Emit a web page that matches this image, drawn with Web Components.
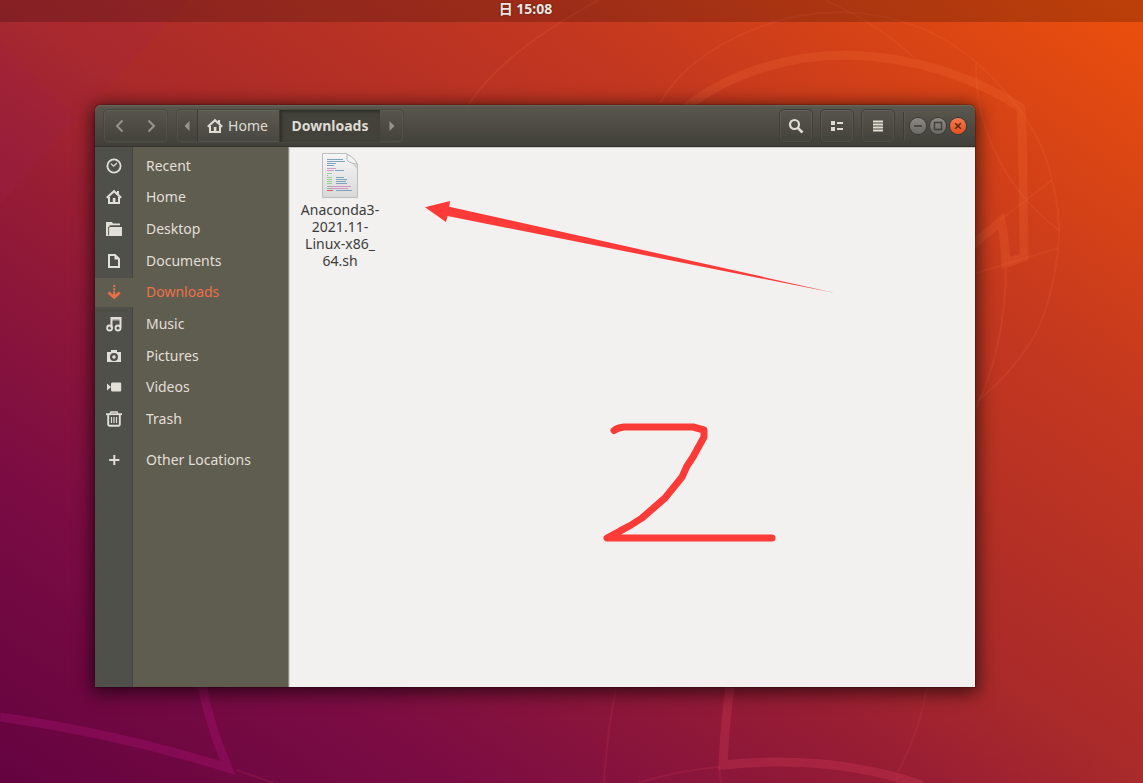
<!DOCTYPE html>
<html lang="en">
<head>
<meta charset="utf-8">
<title>Downloads</title>
<style>
  html, body { margin: 0; height: 100%; }
  body { font-family: "Noto Sans", "Noto Sans CJK SC", sans-serif; font-size: 14px; background: #a2242e; }
</style>
</head>
<body>
<desk-top>
  <top-bar slot="bar">日 15:08</top-bar>
  <file-window>
    <window-header slot="header"></window-header>
    <side-bar slot="side">
      <place-item icon="recent">Recent</place-item>
      <place-item icon="home">Home</place-item>
      <place-item icon="desktop">Desktop</place-item>
      <place-item icon="documents">Documents</place-item>
      <place-item icon="downloads" active>Downloads</place-item>
      <place-item icon="music">Music</place-item>
      <place-item icon="pictures">Pictures</place-item>
      <place-item icon="videos">Videos</place-item>
      <place-item icon="trash">Trash</place-item>
      <place-item icon="plus" slot="other">Other Locations</place-item>
    </side-bar>
    <file-item>Anaconda3-<br>2021.11-<br>Linux-x86_<br>64.sh</file-item>
    <pen-marks slot="marks"></pen-marks>
  </file-window>
</desk-top>

<script>
const define = (name, html) => customElements.define(name, class extends HTMLElement {
  constructor() {
    super();
    this.attachShadow({ mode: 'open' }).innerHTML = html;
  }
});

const ICONS = {
  recent: '<circle cx="8" cy="8" r="6.6" fill="none" stroke="currentColor" stroke-width="1.8"/><path d="M5 5.6 7.6 8.2 11 5" fill="none" stroke="currentColor" stroke-width="1.2"/>',
  home: '<path d="M.8 8.8 8 2.2l7.2 6.6" fill="none" stroke="currentColor" stroke-width="2"/><path d="M3 8v6h10V8" fill="none" stroke="currentColor" stroke-width="2"/><path d="M6.8 9h2.6v5H6.8zM11 2h2v4h-2z" fill="currentColor" stroke="none"/>',
  desktop: '<path d="M0 1h6l1 1.5h7V5H4.500L3 6.500V15H0z" fill="currentColor"/><path d="M4 6h12v9H3V7z" fill="currentColor"/><path d="M2.600 14.500V6L4 4.700h12" fill="none" stroke="#50504a" stroke-width=".9"/>',
  documents: '<path d="M3 2h6l4 4v8H3z" fill="none" stroke="currentColor" stroke-width="2"/><path d="M8.500 1.500v5h5z" fill="currentColor"/>',
  downloads: '<path d="M2.500 8.500 8.200 13.500 13.700 8.500" fill="none" stroke="currentColor" stroke-width="2.600"/><path d="M7.200 1h2v2h-2zM7.200 4.200h2v2h-2zM7.200 7.300h2v5h-2z" fill="currentColor"/>',
  music: '<path d="M5.500 12V2h9v9.500" fill="none" stroke="currentColor" stroke-width="2"/><path d="M5 2h10v2.500H5z" fill="currentColor" opacity=".7"/><circle cx="3.600" cy="12" r="2.500" fill="none" stroke="currentColor" stroke-width="1.800"/><circle cx="12" cy="12" r="2.500" fill="none" stroke="currentColor" stroke-width="1.800"/>',
  pictures: '<path fill-rule="evenodd" d="M5 2h6v2h4v10H1V4h4zM8 5a4 4 0 1 0 0 8 4 4 0 0 0 0-8zm0 2.200a1.800 1.800 0 1 1 0 3.600 1.800 1.800 0 0 1 0-3.600z" fill="currentColor"/>',
  videos: '<path d="M6 3.500h8.500l.7.700v7.600l-.7.700H6l-1-1V4.500zM1 4.500 5 8l-4 3.500z" fill="currentColor"/>',
  trash: '<path d="M0 3.200h16" stroke="currentColor" stroke-width="1.800"/><path d="M4 2.800 5 1h6l1 1.800" fill="none" stroke="currentColor" stroke-width="1.500"/><path d="M2.200 4v9.500q0 1.200 1.200 1.200h9.200q1.200 0 1.200-1.200V4" fill="none" stroke="currentColor" stroke-width="1.900"/><path d="M5.500 6v6M8 6v6M10.500 6v6" stroke="currentColor" stroke-width="1.200"/>',
  plus: '<path d="M8.300 3v10M3.200 8h10.200" stroke="currentColor" stroke-width="2"/>',
  back: '<path d="M10.500 2.500 5 8l5.500 5.500" fill="none" stroke="currentColor" stroke-width="2"/>',
  forward: '<path d="M5.500 2.500 11 8l-5.500 5.500" fill="none" stroke="currentColor" stroke-width="2"/>',
  left: '<path d="M10.500 3v10L5.500 8z" fill="currentColor"/>',
  right: '<path d="M5.500 3v10l5-5z" fill="currentColor"/>',
  search: '<circle cx="6.500" cy="6.500" r="4.500" fill="none" stroke="currentColor" stroke-width="2.200"/><path d="m9.800 9.800 4.700 4.700" stroke="currentColor" stroke-width="2.600"/>',
  view: '<path d="M2 3h4v4H2zM2 9h4v4H2zM8 4h6v2H8zM8 10h6v2H8z" fill="currentColor"/>',
  menu: '<path d="M3 2.500h10v2H3zM3 5.500h10v2H3zM3 8.500h10v2H3zM3 11.500h10v2H3z" fill="currentColor"/>',
  minimize: '<path d="M4 8h8" stroke="currentColor" stroke-width="1.600"/>',
  maximize: '<path d="M4.500 4.500h7v7h-7z" fill="none" stroke="currentColor" stroke-width="1.400"/>',
  close: '<path d="m5.200 5.200 5.600 5.600M10.800 5.200l-5.600 5.600" stroke="currentColor" stroke-width="1.500"/>'
};

customElements.define('sym-icon', class extends HTMLElement {
  connectedCallback() {
    if (this.shadowRoot) return;
    this.attachShadow({ mode: 'open' }).innerHTML =
      `<style>:host{display:block;width:16px;height:16px;flex:none}svg{display:block}</style>
       <svg width="16" height="16" viewBox="0 0 16 16" aria-hidden="true">${ICONS[this.getAttribute('name')]}</svg>`;
  }
});

define('wall-paper', `
  <style>
    :host { display: block; background: linear-gradient(to top right, #640340 0%, #7b0c43 20%, #991e33 41%, #a92a2a 50%, #c4381f 74%, #ec500b 100%); }
    svg { display: block; width: 100%; height: 100%; }
  </style>
  <svg viewBox="0 0 1143 783" preserveAspectRatio="xMidYMid slice" fill="none" aria-hidden="true">
    <path d="M0 0H189L0 205z" fill="#a02050" fill-opacity=".14"/>
    <path d="M0 43 75 118 0 198z" fill="#a02050" fill-opacity=".12"/>
    <g stroke="#ff7a40" stroke-opacity=".17" stroke-width="9">
      <path d="M684 109C730 72 790 55 848 55C915 57 975 77 1021 108Q1023 150 1023 183L1024 257L1006 263Q1005 240 1001 221L970 247"/>
    </g>
    <g stroke="#ff7a50" stroke-opacity=".12" stroke-width="2">
      <path d="M468 105Q505 50 599 0M660 103C690 50 770 12 841 12Q920 14 976 62Q1040 120 1052 180Q1062 220 1058 250Q1050 320 1023 353Q1000 385 975 402"/>
      <path d="M825 0Q880 25 913 57M976 62Q974 130 1018 190Q1038 215 1059 230M1052 180 1000 220M970 275 1058 248M1006 267Q1005 350 975 410"/>
    </g>
    <path d="M0 717Q115 733 228 768Q210 728 201 680" stroke="#b01478" stroke-opacity=".32" stroke-width="9"/>
    <path d="M731 680Q725 720 723 765Q830 754 922 785" stroke="#d83c58" stroke-opacity=".3" stroke-width="9"/>
    <path d="M236 770 274 783M616 688Q606 740 604 783M927 688Q920 730 898 772M638 783Q680 770 719 767L721 783" stroke="#e04060" stroke-opacity=".15" stroke-width="2"/>
  </svg>`);

define('desk-top', `
  <style>
    :host { display: flex; flex-direction: column; min-height: 100vh; position: relative; overflow: hidden; }
    wall-paper { position: absolute; inset: 0; }
    main { position: relative; flex: 1; display: flex; padding: 83px 168px 96px 95px; }
    ::slotted(file-window) { flex: 1; min-width: 0; }
  </style>
  <wall-paper></wall-paper>
  <slot name="bar"></slot>
  <main><slot></slot></main>`);

define('top-bar', `
  <style>
    :host { display: flex; justify-content: center; align-items: flex-start; position: relative; height: 22px; box-sizing: border-box; padding-right: 92px; background: rgba(0,0,0,.2); }
    button { all: unset; font-weight: 700; font-size: 14px; line-height: 18px; color: #ece6e0; text-shadow: 0 0 2px rgba(0,0,0,.5); }
  </style>
  <button type="button"><slot></slot></button>`);

define('file-window', `
  <style>
    :host { display: flex; flex-direction: column; border-radius: 6px 6px 0 0; box-shadow: 0 3px 18px 3px rgba(0,0,0,.62), 0 0 1px 1px rgba(30,10,10,.25); }
    .body { flex: 1; display: flex; min-height: 0; }
    .files { flex: 1; min-width: 0; position: relative; background: #f2f1ef; padding: 4px 9px; overflow: hidden; box-shadow: inset 1px 0 #d4d2ce, inset 0 1px #c9c8c5; }
  </style>
  <slot name="header"></slot>
  <div class="body">
    <slot name="side"></slot>
    <div class="files"><slot></slot><slot name="marks"></slot></div>
  </div>`);

define('window-header', `
  <style>
    :host { display: flex; align-items: center; height: 42px; box-sizing: border-box; padding: 0 9px 0 8px; border-radius: 6px 6px 0 0; border-bottom: 1px solid #34332e; background: linear-gradient(#5b584f, #403f39); box-shadow: inset 0 1px #69665c; color: #dfdbd2; }
    button { font: inherit; color: inherit; background: none; border: 0; padding: 0; margin: 0; display: flex; align-items: center; justify-content: center; }
    .group, .tool { box-sizing: border-box; display: flex; height: 34px; border: 1px solid #3f3e38; border-radius: 5px; box-shadow: inset 0 0 0 1px rgba(255,255,255,.06); }
    .nav { width: 65px; margin-right: 8px; border-color: #47463f; color: #97948b; }
    .nav button { flex: 1; }
    .step { width: 20px; color: #97948b; }
    .path { border-color: #47463f; }
    .crumb { box-sizing: border-box; height: 32px; border-left: 1px solid #3b3a34; }
    .home { width: 82px; gap: 5px; padding-right: 2px; background: rgba(255,255,255,.03); }
    .here { width: 101px; font-weight: 700; background: #42413a; box-shadow: inset 2px 2px 3px rgba(0,0,0,.28); }
    .here + .step { width: 23px; }
    .tool { width: 34px; }
    .tool + .tool { margin-left: 7px; }
    .space { flex: 1; }
    .rule { width: 1px; height: 28px; background: #3d3c36; margin: 0 6px 0 8px; box-shadow: 1px 0 rgba(255,255,255,.05); }
    .win { display: flex; gap: 4px; }
    .win button { width: 16px; height: 16px; border-radius: 50%; background: linear-gradient(#8b8983, #6c6a64); color: #403f39; box-shadow: 0 0 0 1px #3b3a35; }
    .win .close { background: linear-gradient(#f6794f, #e6501f); color: #57280f; }
  </style>
  <div class="group nav">
    <button type="button" aria-label="Back"><sym-icon name="back"></sym-icon></button>
    <button type="button" aria-label="Forward"><sym-icon name="forward"></sym-icon></button>
  </div>
  <div class="group path">
    <button type="button" class="step" aria-label="Scroll left"><sym-icon name="left"></sym-icon></button>
    <button type="button" class="crumb home"><sym-icon name="home"></sym-icon>Home</button>
    <button type="button" class="crumb here">Downloads</button>
    <button type="button" class="step" aria-label="Scroll right"><sym-icon name="right"></sym-icon></button>
  </div>
  <div class="space"></div>
  <button type="button" class="tool" aria-label="Search"><sym-icon name="search"></sym-icon></button>
  <button type="button" class="tool" aria-label="View"><sym-icon name="view"></sym-icon></button>
  <button type="button" class="tool" aria-label="Menu"><sym-icon name="menu"></sym-icon></button>
  <div class="rule"></div>
  <div class="win">
    <button type="button" aria-label="Minimize"><sym-icon name="minimize"></sym-icon></button>
    <button type="button" aria-label="Maximize"><sym-icon name="maximize"></sym-icon></button>
    <button type="button" class="close" aria-label="Close"><sym-icon name="close"></sym-icon></button>
  </div>`);

define('side-bar', `
  <style>
    :host { display: block; flex: none; width: 194px; box-sizing: border-box; padding-top: 4px; border-right: 1px solid #8f8d84; background: linear-gradient(90deg, #50504a 37px, #45453f 37px 38px, #5f5d50 38px); }
    nav { display: grid; grid-auto-rows: 1fr; gap: 2px; height: 283px; }
    .other { display: grid; height: 30px; margin-top: 11px; }
  </style>
  <nav aria-label="Places"><slot></slot></nav>
  <div class="other"><slot name="other"></slot></div>`);

customElements.define('place-item', class extends HTMLElement {
  connectedCallback() {
    if (this.shadowRoot) return;
    this.attachShadow({ mode: 'open' }).innerHTML = `
      <style>
        :host { display: flex; min-height: 0; color: #e2dfd8; }
        :host([active]) { color: #ec7145; background: #5f5d50; }
        a { flex: 1; display: flex; align-items: center; gap: 24px; padding-left: 11px; color: inherit; text-decoration: none; line-height: 20px; white-space: nowrap; }
      </style>
      <a href="#"><sym-icon name="${this.getAttribute('icon')}"></sym-icon><slot></slot></a>`;
  }
});

define('file-item', `
  <style>
    :host { display: block; width: 84px; }
    button { all: unset; display: flex; flex-direction: column; align-items: center; gap: 2px; width: 100%; text-align: center; line-height: 17px; color: #3c3c3c; }
  </style>
  <button type="button">
    <svg width="38" height="48" viewBox="0 0 38 48" aria-hidden="true">
      <defs><linearGradient id="p" x2="0" y2="1"><stop stop-color="#f6f6f6"/><stop offset="1" stop-color="#d9d9d9"/></linearGradient></defs>
      <path d="M1.500 2.500h24L36.500 13v33.500h-35z" fill="url(#p)" stroke="#bdbdbd"/>
      <path d="M26 10Q30 13 36 14v4Q31 12 26 10z" fill="#000" fill-opacity=".12"/>
      <path d="M26 3v5.500Q27 12 36 13Q35 8 26 3z" fill="#f4f4f4" stroke="#b8b8b8"/>
      <g fill="none" stroke-width="1" shape-rendering="crispEdges">
        <path d="M6 8.500h16M6 10.500h18M6 12.500h9M6 14.500h7M14 19.500h9M15 26.500h8M15 28.500h11M15 30.500h10M15 32.500h11M15 39.500h16" stroke="#7ba6c0"/>
        <path d="M6 17.500h9M6 19.500h7M11 35.500h19M11 37.500h16" stroke="#d49ac6"/>
        <path d="M6 22.500h5M6 26.500h5M6 28.500h5M6 30.500h5M6 32.500h5" stroke="#9bcf93"/>
        <path d="M6 24.500h1M6 35.500h5M6 37.500h5" stroke="#aaa"/>
        <path d="M6 39.500h6" stroke="#d9605f"/>
      </g>
    </svg>
    <span><slot></slot></span>
  </button>`);

define('pen-marks', `
  <style>
    :host { position: absolute; left: 0; top: 0; pointer-events: none; }
    svg { display: block; }
  </style>
  <svg width="686" height="540" viewBox="289 147 686 540" aria-hidden="true">
    <path d="M425 207.300 450 201 449.300 206.700 835 293 447.500 216 446 222z" fill="#fc3a38"/>
    <path d="M614 430.500Q618 427.500 624 427H693L704 430V437L693 457L687 466L682 477L665 498L642 518Q632 525 620 531L607 538H772" fill="none" stroke="#fc3a38" stroke-width="7" stroke-linecap="round" stroke-linejoin="round"/>
  </svg>`);
</script>
</body>
</html>
